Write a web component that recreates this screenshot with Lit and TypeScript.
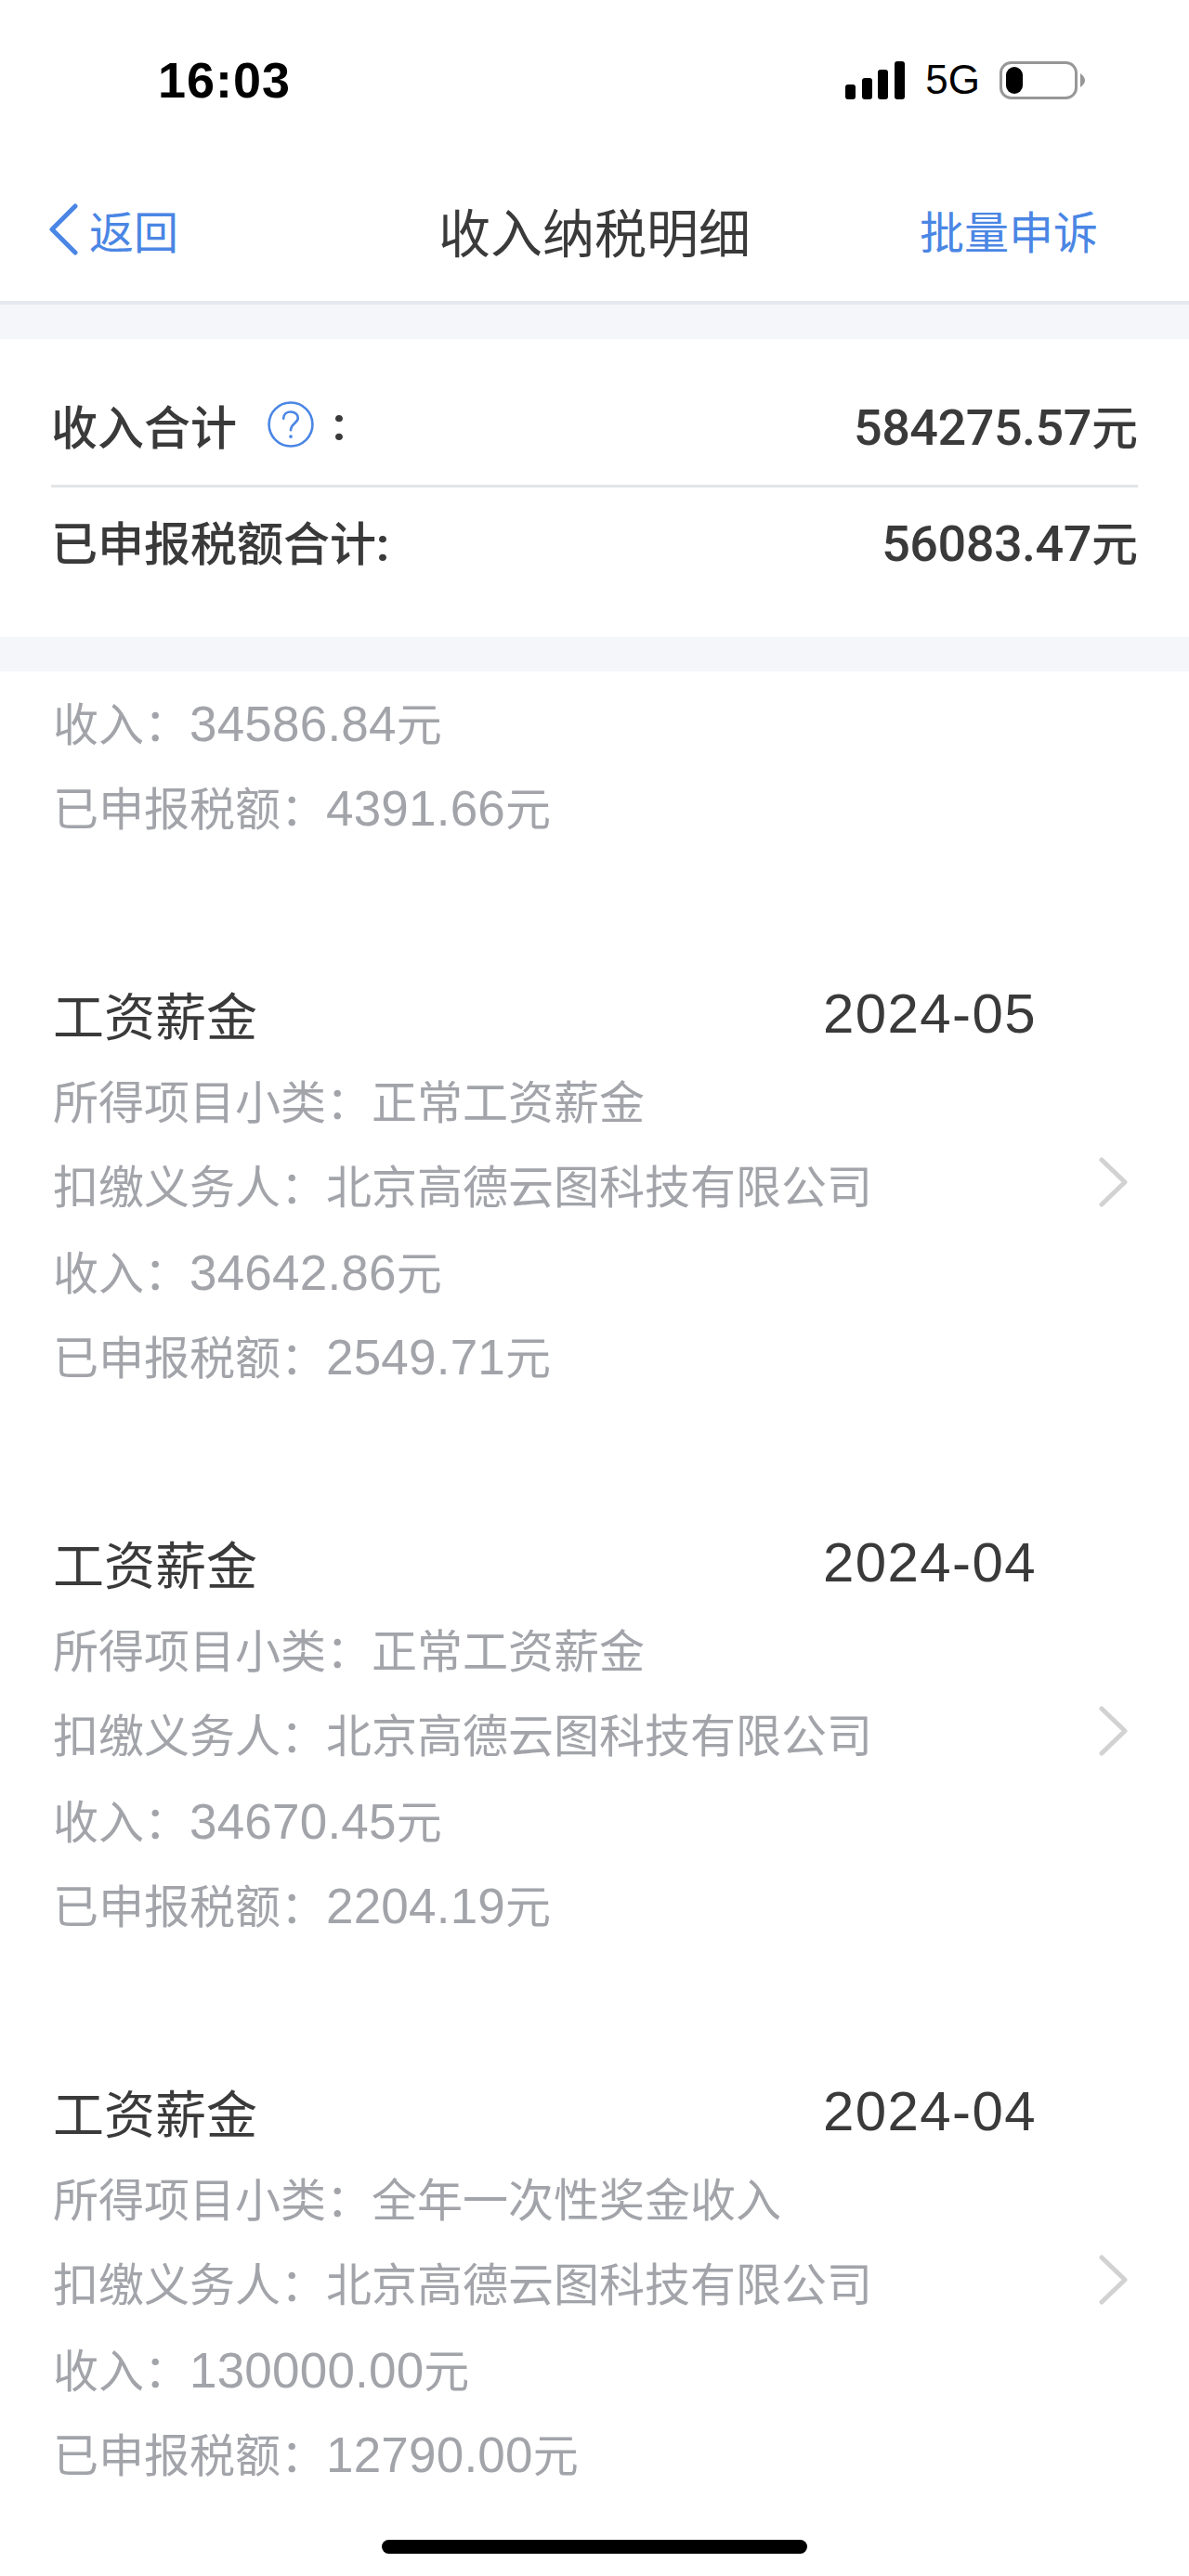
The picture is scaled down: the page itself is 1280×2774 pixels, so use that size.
import { LitElement, html, css } from 'lit';
import { customElement } from 'lit/decorators.js';

interface Income {
  date: string;
  subtype: string;
  income: string;
  tax: string;
}

const PAYER = '北京高德云图科技有限公司';

const INCOMES: Income[] = [
  { date: '2024-05', subtype: '正常工资薪金', income: '34642.86', tax: '2549.71' },
  { date: '2024-04', subtype: '正常工资薪金', income: '34670.45', tax: '2204.19' },
  { date: '2024-04', subtype: '全年一次性奖金收入', income: '130000.00', tax: '12790.00' },
];

@customElement('app-root')
export class AppRoot extends LitElement {
  static styles = css`
    :host {
      display: block;
      position: relative;
      height: 2774px;
      overflow: hidden;
      background: #fff;
      font-family: 'Liberation Sans', 'Noto Sans CJK SC', sans-serif;
      color: #333;
    }

    .status {
      height: 170px;
      display: flex;
      align-items: center;
      justify-content: space-between;
      padding: 2px 112px 0 170px;
      box-sizing: border-box;
    }
    .time {
      font-size: 54px;
      font-weight: 700;
      color: #000;
      letter-spacing: 1px;
    }
    .status-icons {
      display: flex;
      align-items: center;
    }
    .network {
      font-size: 44px;
      color: #000;
      margin: 0 21px 0 22px;
    }

    .nav {
      height: 158px;
      display: flex;
      align-items: center;
      justify-content: space-between;
      padding: 0 98px 0 53px;
      box-sizing: border-box;
      position: relative;
      border-bottom: 4px solid #e6e8ee;
    }
    .back {
      display: flex;
      align-items: center;
      gap: 12px;
      font-size: 48px;
      color: #4a86e4;
    }
    .title {
      position: absolute;
      left: 0;
      right: 0;
      text-align: center;
      font-size: 56px;
      color: #3a3a3a;
      pointer-events: none;
    }
    .action {
      font-size: 48px;
      color: #4a86e4;
    }

    .band {
      height: 37px;
      background: #f5f6fa;
    }

    .summary {
      padding: 0 55px;
      height: 321px;
    }
    .summary-row {
      display: flex;
      align-items: center;
      justify-content: space-between;
      font-size: 50px;
      font-weight: 500;
      color: #3a3a3a;
    }
    .summary-row.first {
      height: 160px;
      padding-top: 27px;
      border-bottom: 3px solid #e3e4e6;
      box-sizing: border-box;
    }
    .summary-row.second {
      height: 114px;
    }
    .label {
      display: flex;
      align-items: center;
    }
    .help {
      margin: 0 20px 0 33px;
    }
    .amount {
      font-family: 'Roboto', 'Liberation Sans', sans-serif;
      font-size: 54px;
      font-weight: 500;
      letter-spacing: -0.5px;
    }
    .colon {
      font-family: 'Roboto', 'Liberation Sans', sans-serif;
      font-weight: 700;
    }

    .list {
      padding-top: 11px;
    }
    .rows {
      font-size: 49px;
      color: #a2a4aa;
    }
    .row {
      height: 91px;
      line-height: 91px;
      white-space: nowrap;
      padding-left: 57px;
    }
    .num {
      font-size: 53px;
      letter-spacing: 0.2px;
    }
    .item {
      display: flex;
      align-items: center;
      justify-content: space-between;
      padding: 0 66px 0 57px;
      margin-top: 122px;
    }
    .item .row {
      padding-left: 0;
    }
    .item-body {
      width: 1059px;
    }
    .item-head {
      height: 105px;
      display: flex;
      align-items: center;
      justify-content: space-between;
      font-size: 55px;
      color: #3a3a3a;
    }
    .date {
      font-size: 60px;
      letter-spacing: 1.4px;
      padding-top: 2px;
    }

    .home {
      position: absolute;
      left: 411px;
      top: 2735px;
      width: 458px;
      height: 15px;
      border-radius: 8px;
      background: #000;
    }
  `;

  renderItem(item: Income) {
    return html`
      <div class="item">
        <div class="item-body">
          <div class="item-head">
            <span>工资薪金</span>
            <span class="date">${item.date}</span>
          </div>
          <div class="rows">
            <div class="row">所得项目小类：${item.subtype}</div>
            <div class="row">扣缴义务人：${PAYER}</div>
            <div class="row">收入：<span class="num">${item.income}</span>元</div>
            <div class="row">已申报税额：<span class="num">${item.tax}</span>元</div>
          </div>
        </div>
        <svg width="31" height="54" viewBox="0 0 31 54" fill="none">
          <path d="M3 3L28 27L3 51" stroke="#d2d2d2" stroke-width="5" stroke-linecap="round" stroke-linejoin="round"/>
        </svg>
      </div>
    `;
  }

  render() {
    return html`
      <div class="status">
        <span class="time">16:03</span>
        <div class="status-icons">
          <svg width="64" height="41" viewBox="0 0 64 41" fill="#000">
            <rect x="0" y="25" width="11" height="16" rx="3"/>
            <rect x="18" y="18" width="11" height="23" rx="3"/>
            <rect x="35" y="9" width="11" height="32" rx="3"/>
            <rect x="53" y="0" width="11" height="41" rx="3"/>
          </svg>
          <span class="network">5G</span>
          <svg width="92" height="41" viewBox="0 0 92 41" fill="none">
            <rect x="1.5" y="1.5" width="81" height="38" rx="11" stroke="#979797" stroke-width="3"/>
            <rect x="7" y="6" width="18" height="29" rx="9" fill="#000"/>
            <path d="M87 13C90 15 92 18 92 20.5C92 23 90 26 87 28Z" fill="#979797"/>
          </svg>
        </div>
      </div>

      <div class="nav">
        <div class="back">
          <svg width="31" height="56" viewBox="0 0 31 56" fill="none">
            <path d="M28 3L3 28L28 53" stroke="#4a86e4" stroke-width="5" stroke-linecap="round" stroke-linejoin="round"/>
          </svg>
          <span>返回</span>
        </div>
        <div class="title">收入纳税明细</div>
        <div class="action">批量申诉</div>
      </div>

      <div class="band"></div>

      <div class="summary">
        <div class="summary-row first">
          <div class="label">
            <span>收入合计</span>
            <svg class="help" width="50" height="50" viewBox="0 0 48 48" fill="none">
              <circle cx="24" cy="24" r="22.5" stroke="#4a86e4" stroke-width="2.5"/>
              <path d="M16.5 18C16.5 13.5 20 11 24 11C28 11 31.5 13.5 31.5 17.5C31.5 22.5 24 23.5 24 30" stroke="#4a86e4" stroke-width="2.5" stroke-linecap="round"/>
              <circle cx="24" cy="36.5" r="1.8" fill="#4a86e4"/>
            </svg>
            <span class="colon">:</span>
          </div>
          <span><span class="amount">584275.57</span>元</span>
        </div>
        <div class="summary-row second">
          <span>已申报税额合计<span class="colon">:</span></span>
          <span><span class="amount">56083.47</span>元</span>
        </div>
      </div>

      <div class="band"></div>

      <div class="list">
        <div class="rows">
          <div class="row">收入：<span class="num">34586.84</span>元</div>
          <div class="row">已申报税额：<span class="num">4391.66</span>元</div>
        </div>
        ${INCOMES.map((item) => this.renderItem(item))}
      </div>

      <div class="home"></div>
    `;
  }
}

declare global {
  interface HTMLElementTagNameMap {
    'app-root': AppRoot;
  }
}
